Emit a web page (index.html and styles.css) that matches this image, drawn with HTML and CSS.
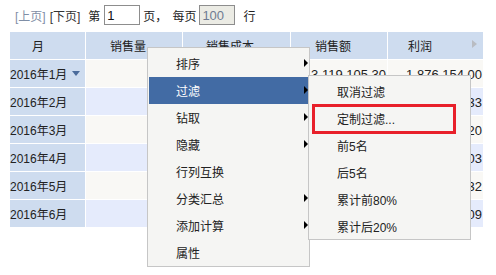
FILE: index.html
```html
<!DOCTYPE html>
<html>
<head>
<meta charset="utf-8">
<link rel="stylesheet" href="styles.css">
</head>
<body>
<div class="page">
  <div class="pager">
    <span class="lnk off">[上页]</span>
    <span class="lnk next">[下页]</span>
    <span class="di">第</span>
    <input class="pg num" value="1">
    <span class="ye">页，</span>
    <span class="mei">每页</span>
    <input class="pg size" value="100" disabled>
    <span class="hang">行</span>
  </div>

  <div class="grid">
    <div class="hd c1">月</div>
    <div class="hd c2">销售量</div>
    <div class="hd c3">销售成本</div>
    <div class="hd c4">销售额</div>
    <div class="hd c5">利润<span class="hd-arrow"></span></div>

    <div class="rh">2016年1月<span class="drop"></span></div>
    <div class="cell odd">2,586</div>
    <div class="cell odd">1,242,951.30</div>
    <div class="cell odd">3,119,105.30</div>
    <div class="cell odd">1,876,154.00</div>

    <div class="rh">2016年2月</div>
    <div class="cell even">2,114</div>
    <div class="cell even">1,035,482.10</div>
    <div class="cell even">2,641,520.43</div>
    <div class="cell even">1,606,038.33</div>

    <div class="rh">2016年3月</div>
    <div class="cell odd">2,903</div>
    <div class="cell odd">1,410,276.50</div>
    <div class="cell odd">3,478,912.70</div>
    <div class="cell odd">2,068,636.20</div>

    <div class="rh">2016年4月</div>
    <div class="cell even">2,457</div>
    <div class="cell even">1,187,630.80</div>
    <div class="cell even">2,960,434.83</div>
    <div class="cell even">1,772,804.03</div>

    <div class="rh">2016年5月</div>
    <div class="cell odd">2,768</div>
    <div class="cell odd">1,325,019.60</div>
    <div class="cell odd">3,302,851.92</div>
    <div class="cell odd">1,977,832.32</div>

    <div class="rh">2016年6月</div>
    <div class="cell even">2,391</div>
    <div class="cell even">1,160,748.90</div>
    <div class="cell even">2,887,257.99</div>
    <div class="cell even">1,726,509.09</div>
  </div>

  <div class="menu main">
    <div class="item sub-arrow">排序</div>
    <div class="item sub-arrow active">过滤</div>
    <div class="item sub-arrow">钻取</div>
    <div class="item sub-arrow">隐藏</div>
    <div class="item">行列互换</div>
    <div class="item sub-arrow">分类汇总</div>
    <div class="item sub-arrow">添加计算</div>
    <div class="item">属性</div>
  </div>

  <div class="menu submenu">
    <div class="item">取消过滤</div>
    <div class="item">定制过滤...</div>
    <div class="item">前5名</div>
    <div class="item">后5名</div>
    <div class="item">累计前80%</div>
    <div class="item">累计后20%</div>
    <div class="mark"></div>
  </div>
</div>
</body>
</html>
```

FILE: styles.css
```css
html, body {
  margin: 0;
  padding: 0;
  background: #ffffff;
}

body {
  font-family: "Liberation Sans", "Noto Sans CJK SC", sans-serif;
  font-size: 12px;
  color: #222222;
}

.page {
  position: relative;
  width: 496px;
  height: 275px;
  padding-top: 5px;
  box-sizing: border-box;
}

/* pager */
.pager {
  display: flex;
  align-items: center;
  height: 20px;
  padding-left: 15px;
  margin-bottom: 7px;
  white-space: nowrap;
}

.lnk { color: #333333; }
.lnk.off { color: #7f8ea6; }
.next { margin-left: 4px; }
.di { margin-left: 8px; }
.ye { margin-left: 3px; }
.mei { margin-left: 5px; }
.hang { margin-left: 8px; }

.pg {
  box-sizing: border-box;
  width: 36px;
  height: 20px;
  margin: 0 0 0 4px;
  padding: 0 0 0 2px;
  border: 1px solid #8d8d8d;
  background: #ffffff;
  font-family: "Liberation Sans", sans-serif;
  font-size: 13px;
  color: #111111;
  outline: none;
}

.pg.size {
  margin-left: 3px;
  background: #ebebe4;
  color: #6f7b92;
}

/* table */
.grid {
  display: grid;
  grid-template-columns: 75px 96px 107px 96px 95px;
  grid-auto-rows: 27px;
  gap: 1px;
  margin-left: 10px;
  width: 473px;
  background: #ffffff;
}

.hd {
  position: relative;
  background: #cedcef;
  text-align: center;
  box-sizing: border-box;
  padding-top: 3px;
  line-height: 24px;
  white-space: nowrap;
  overflow: hidden;
}

.c1 { padding-right: 19px; }
.c2 { padding-right: 12px; }
.c3 { padding-right: 13px; }
.c4 { padding-right: 12px; }
.c5 { padding-right: 31px; }

.hd-arrow {
  position: absolute;
  right: 6px;
  top: 8px;
  width: 0;
  height: 0;
  border-left: 5px solid #b9bcc2;
  border-top: 4px solid transparent;
  border-bottom: 4px solid transparent;
}

.rh {
  background: #cedcef;
  box-sizing: border-box;
  padding-top: 3px;
  line-height: 24px;
  white-space: nowrap;
}

.drop {
  display: inline-block;
  vertical-align: top;
  margin: 8px 0 0 5px;
  width: 0;
  height: 0;
  border-top: 5px solid #4b6b9b;
  border-left: 4px solid transparent;
  border-right: 4px solid transparent;
}

.cell {
  box-sizing: border-box;
  padding: 3px 1px 0 0;
  line-height: 24px;
  text-align: right;
  font-size: 13px;
  white-space: nowrap;
}

.odd { background: #f9f8f5; }
.even { background: #e5ebfc; }

/* context menus */
.menu {
  position: absolute;
  box-sizing: border-box;
  background: #f5f5f3;
  border: 1px solid #c6c6c6;
  padding: 2px 0 0 1px;
}

.menu.main {
  left: 147px;
  top: 47px;
  width: 163px;
  height: 220px;
}

.menu.submenu {
  left: 308px;
  top: 75px;
  width: 163px;
  height: 165px;
}

.item {
  position: relative;
  height: 27px;
  box-sizing: border-box;
  padding: 4px 0 0 27px;
  line-height: 23px;
  color: #222222;
  white-space: nowrap;
}

.item.active {
  background: #426ba4;
  color: #ffffff;
}

.sub-arrow::after {
  content: "";
  position: absolute;
  right: 1px;
  top: 9px;
  width: 0;
  height: 0;
  border-left: 4px solid #000000;
  border-top: 4px solid transparent;
  border-bottom: 4px solid transparent;
}

.mark {
  position: absolute;
  left: 3px;
  top: 28px;
  width: 144px;
  height: 30px;
  box-sizing: border-box;
  border: 3px solid #e8202a;
}
```
